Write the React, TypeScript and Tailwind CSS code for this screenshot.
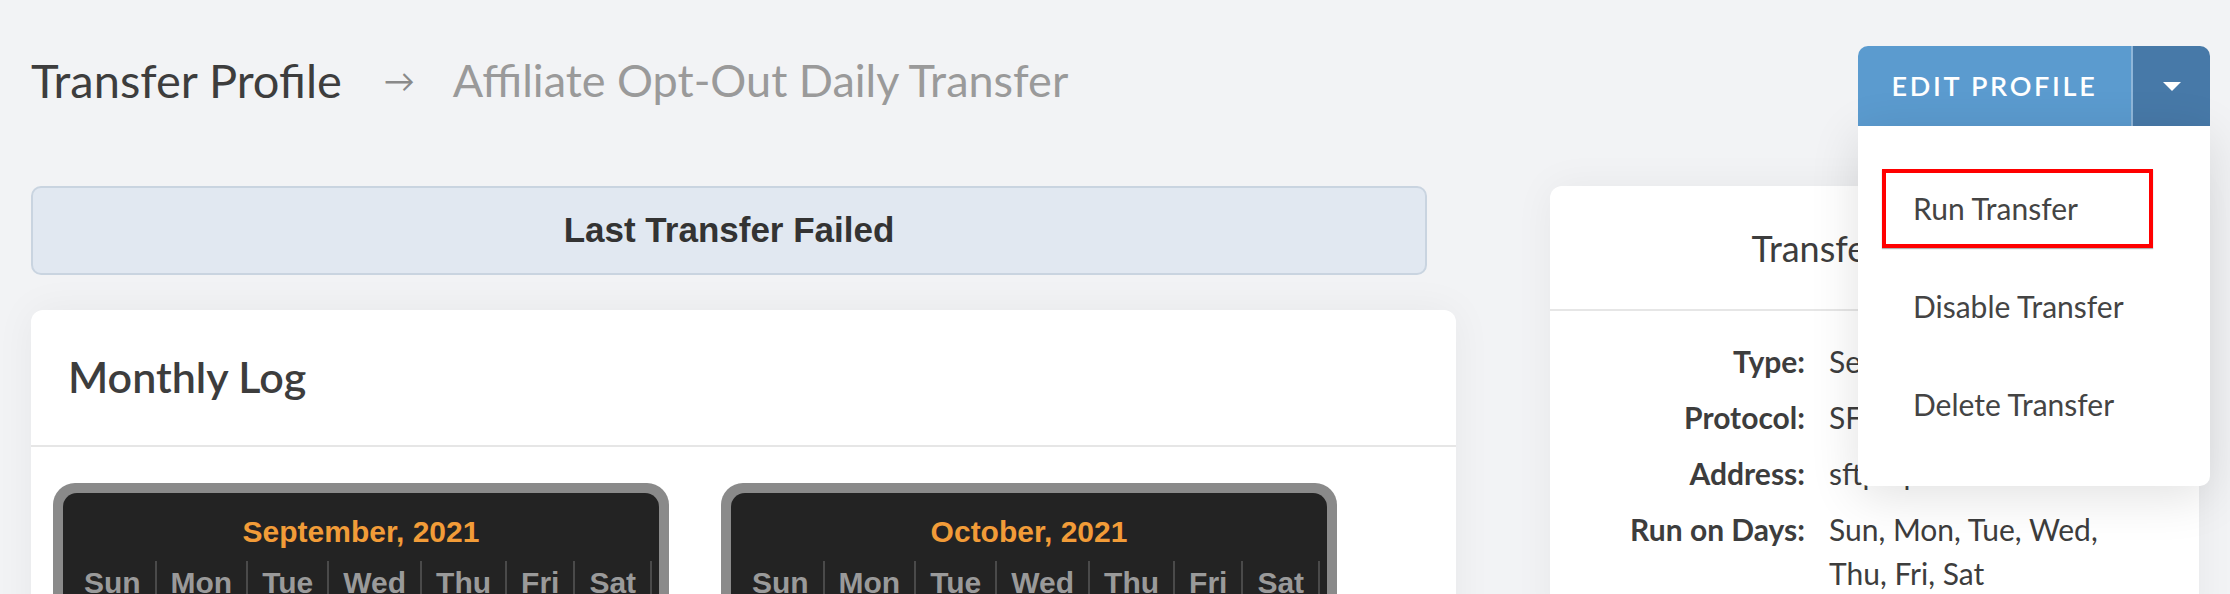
import React from 'react';

const days = ['Sun', 'Mon', 'Tue', 'Wed', 'Thu', 'Fri', 'Sat'];

interface MonthProps {
  title: string;
  startDay: number;
  length: number;
}

function MonthCalendar({ title, startDay, length }: MonthProps) {
  const cells: (number | null)[] = [];
  for (let i = 0; i < startDay; i++) cells.push(null);
  for (let d = 1; d <= length; d++) cells.push(d);
  while (cells.length % 7 !== 0) cells.push(null);
  const weeks: (number | null)[][] = [];
  for (let i = 0; i < cells.length; i += 7) weeks.push(cells.slice(i, i + 7));

  return (
    <div className="w-[616px] rounded-[22px] bg-[#8a8a8a] p-[10px]">
      <div className="rounded-[14px] bg-[#232323] pt-[20px] pb-[20px] font-['Liberation_Sans',Arial,sans-serif] font-bold">
        <div className="text-center text-[30px] leading-[38px] text-[#f29c38]">{title}</div>
        <div className="mt-[10px] flex justify-center">
          <table className="border-collapse">
            <thead>
              <tr>
                {days.map((d) => (
                  <th
                    key={d}
                    className="border-r-2 border-[#4a4a4a] px-[14px] pt-[4px] text-[30px] font-bold leading-[36px] text-[#9a9a9a]"
                  >
                    {d}
                  </th>
                ))}
              </tr>
            </thead>
            <tbody>
              {weeks.map((w, i) => (
                <tr key={i}>
                  {w.map((d, j) => (
                    <td
                      key={j}
                      className="border-r-2 border-[#4a4a4a] py-[8px] text-center text-[28px] leading-[36px] text-[#cfcfcf]"
                    >
                      {d ?? ''}
                    </td>
                  ))}
                </tr>
              ))}
            </tbody>
          </table>
        </div>
      </div>
    </div>
  );
}

const details: [string, string][] = [
  ['Type:', 'Send'],
  ['Protocol:', 'SFTP'],
  ['Address:', 'sftp.optizmo.com'],
  ['Run on Days:', 'Sun, Mon, Tue, Wed, Thu, Fri, Sat'],
];

export default function App() {
  return (
    <div className="relative min-h-[594px] overflow-hidden bg-[#f2f3f5] font-['Lato',sans-serif] text-[#3d3d3d]">
      {/* header */}
      <div className="flex items-start justify-between pl-[31px] pr-[20px] pt-[46px]">
        <h1 className="mt-[4px] flex items-center leading-[60px] font-normal">
          <span className="text-[47px] text-[#3d3d3d]">Transfer Profile</span>
          <span className="ml-[42px] mr-[38px] text-[31px] text-[#8a8a8a]">→</span>
          <span className="text-[45px] text-[#9a9a9a]">Affiliate Opt-Out Daily Transfer</span>
        </h1>

        <div className="relative z-20 w-[352px]">
          <div className="flex h-[80px] overflow-hidden rounded-t-[10px]">
            <button className="flex flex-1 items-center justify-center bg-[#5b9bcf] text-[27px] font-semibold tracking-[0.1em] text-white">
              EDIT PROFILE
            </button>
            <div className="w-[2px] bg-[#8fb6d9]" />
            <button className="flex w-[77px] items-center justify-center bg-[#4779a8]">
              <span className="h-0 w-0 border-x-[9px] border-t-[9px] border-x-transparent border-t-white" />
            </button>
          </div>
          <div className="absolute left-0 top-full w-full rounded-b-[10px] bg-white py-[33px] shadow-[0_10px_50px_rgba(0,0,0,0.12)]">
            {['Run Transfer', 'Disable Transfer', 'Delete Transfer'].map((item) => (
              <div key={item} className="flex h-[98px] items-center pl-[55px] text-[30px] text-[#444]">
                {item}
              </div>
            ))}
            <div className="pointer-events-none absolute left-[24px] top-[43px] h-[79px] w-[271px] border-4 border-[#ff0000] shadow-[0_1px_1px_rgba(0,0,0,0.3)]" />
          </div>
        </div>
      </div>

      {/* body */}
      <div className="mt-[60px] flex gap-[94px] px-[31px]">
        <div className="w-[1425px] shrink-0">
          <div className="flex h-[89px] w-[1396px] items-center justify-center rounded-[10px] border-2 border-[#c9d4e0] bg-[#e1e8f1] font-['Liberation_Sans',Arial,sans-serif] text-[35px] font-bold text-[#333]">
            Last Transfer Failed
          </div>

          <div className="mt-[35px] rounded-[12px] bg-white shadow-[0_0_40px_rgba(0,0,0,0.05)]">
            <div className="flex h-[137px] items-center border-b-2 border-[#e6e6e6] pl-[37px]">
              <h2 className="text-[43px] font-semibold text-[#3d3d3d]">Monthly Log</h2>
            </div>
            <div className="flex gap-[52px] px-[22px] pt-[36px] pb-[40px]">
              <MonthCalendar title="September, 2021" startDay={3} length={30} />
              <MonthCalendar title="October, 2021" startDay={5} length={31} />
            </div>
          </div>
        </div>

        <div className="w-[649px] shrink-0">
          <div className="rounded-[12px] bg-white shadow-[0_0_40px_rgba(0,0,0,0.05)]">
            <div className="flex h-[125px] items-center justify-center border-b-2 border-[#e6e6e6] text-[36px] text-[#3d3d3d]">
              Transfer Details
            </div>
            <div className="grid grid-cols-[255px_300px] gap-x-[24px] pt-[22px] pb-[30px] text-[30px] leading-[44px]">
              {details.map(([label, value]) => (
                <React.Fragment key={label}>
                  <div className="py-[6px] text-right font-bold text-[#3d3d3d]">{label}</div>
                  <div className="py-[6px] text-[#3d3d3d]">{value}</div>
                </React.Fragment>
              ))}
            </div>
          </div>
        </div>
      </div>
    </div>
  );
}
